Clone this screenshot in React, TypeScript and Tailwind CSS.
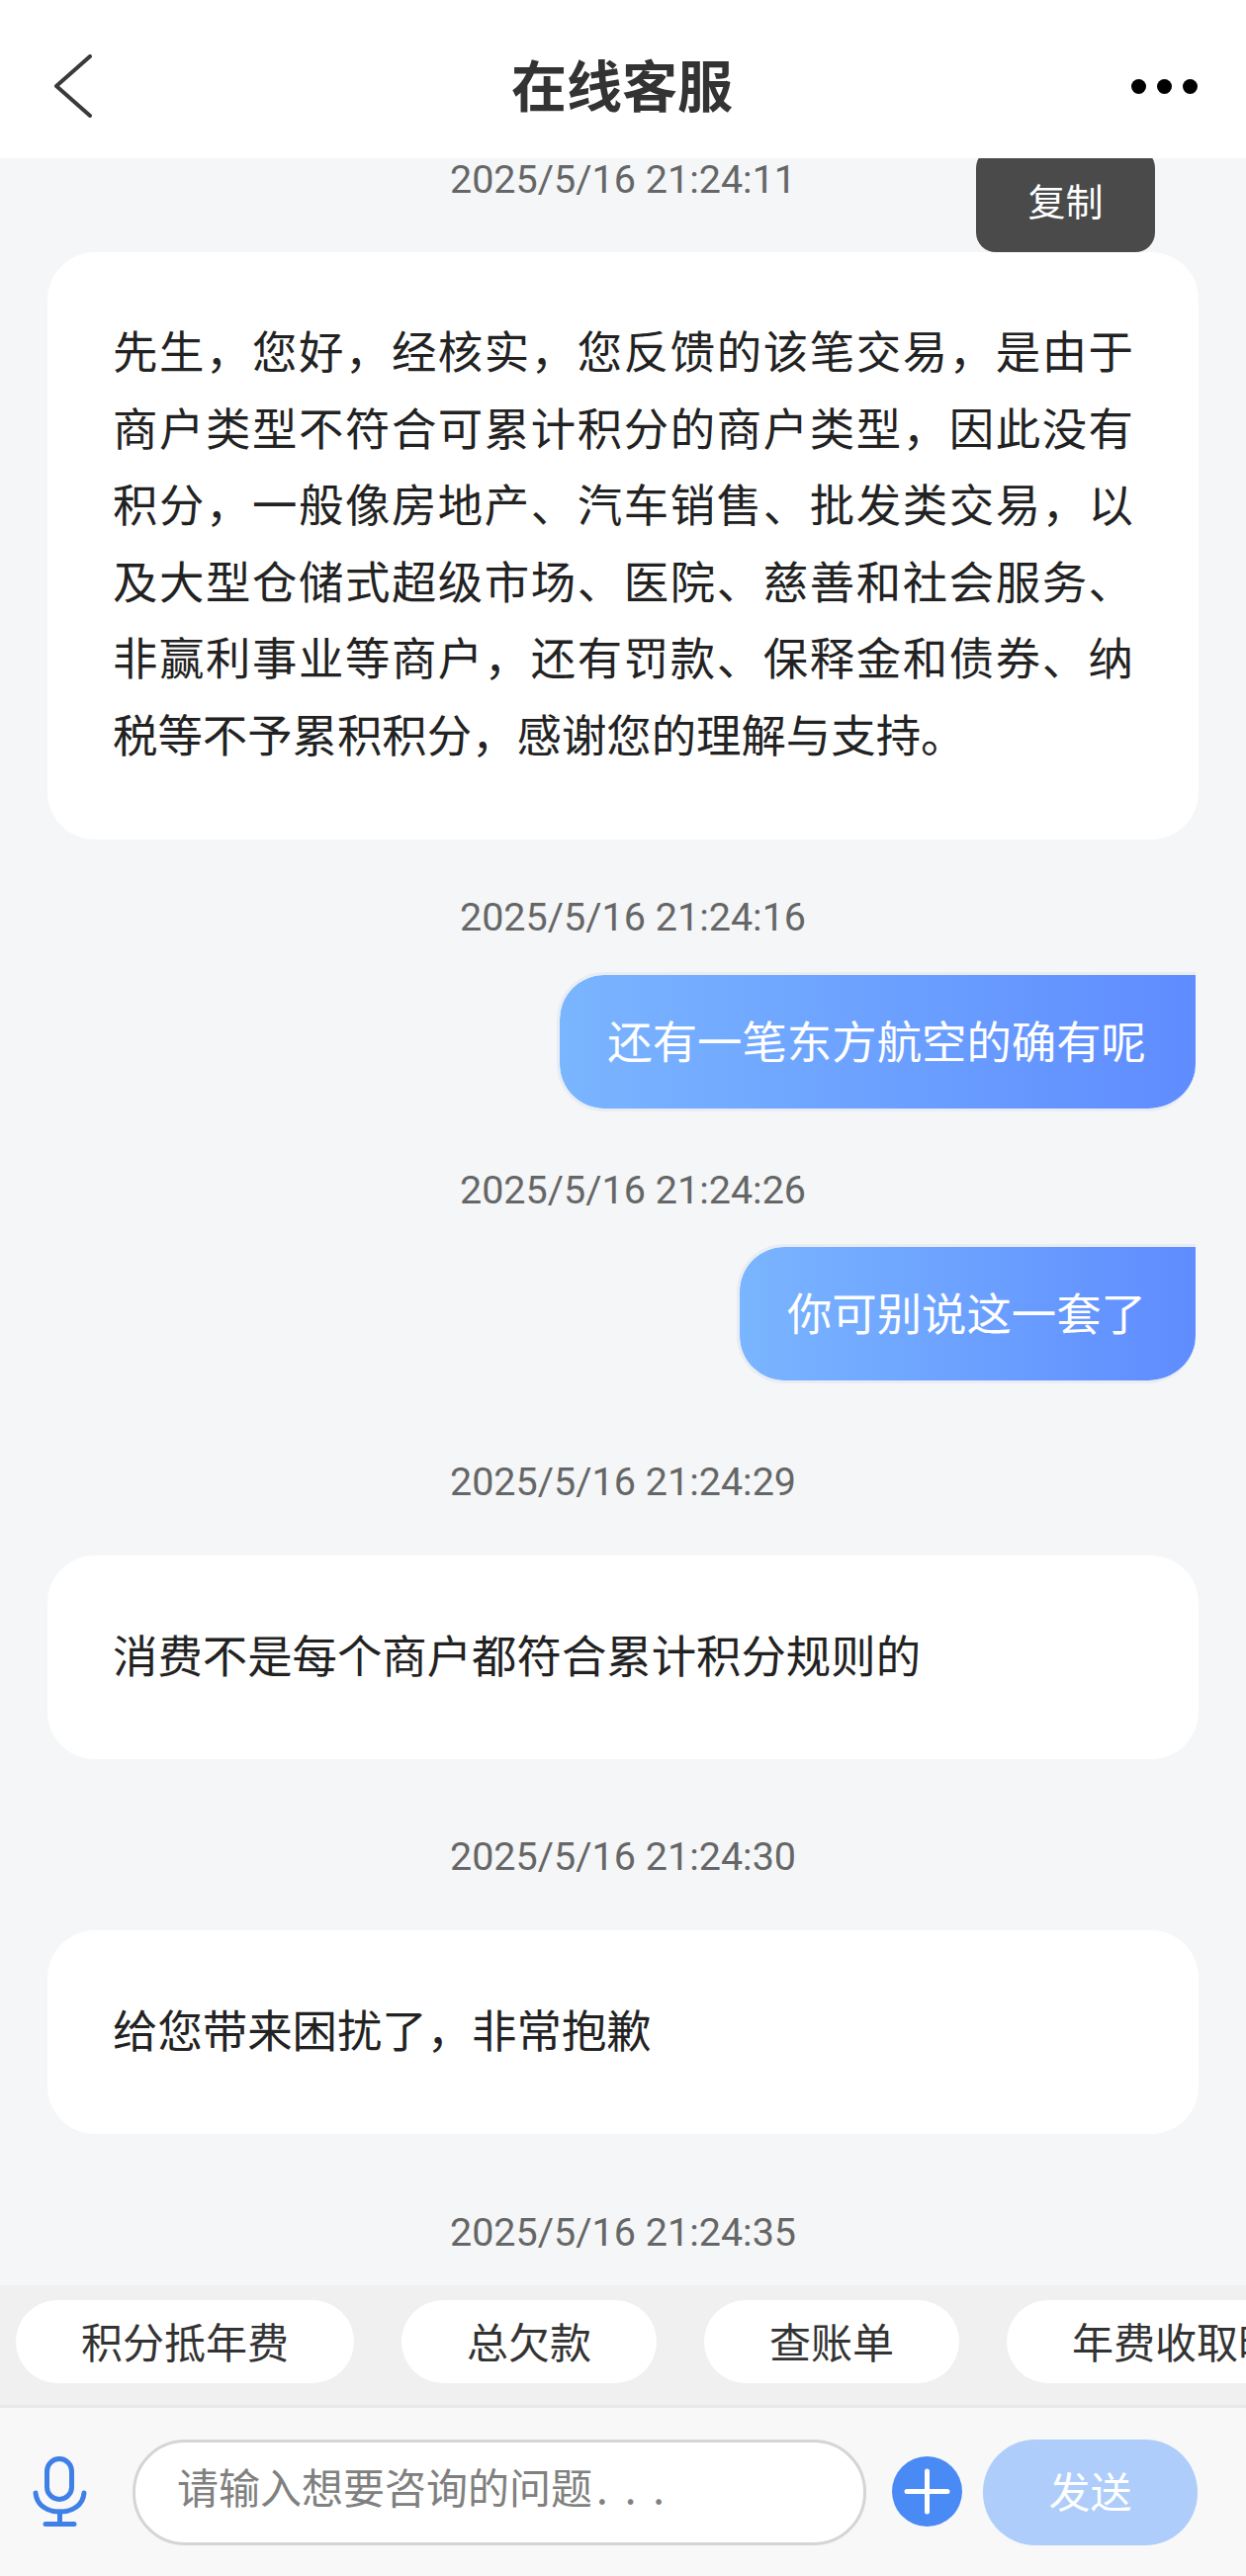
const sans = "font-['Noto_Sans_CJK_SC','Noto_Sans',sans-serif]";

function Stamp({ text, shift, className }: { text: string; shift?: boolean; className?: string }) {
  return (
    <div className={`h-[38px] flex items-center justify-center text-[39.5px] leading-[38px] text-[#666666] font-['Roboto','Noto_Sans_CJK_SC',sans-serif] ${shift ? 'pl-[20px]' : ''} ${className ?? ''}`}>
      {text}
    </div>
  );
}

function Card({ lines, className }: { lines: string[]; className?: string }) {
  return (
    <div className={`mx-[48px] bg-white rounded-[48px] px-[66px] text-[45.4px] leading-[77.5px] text-[#222222] ${className ?? ''}`}>
      {lines.map((l, i) => (
        <div
          key={l}
          className={i < lines.length - 1 ? 'text-justify [text-align-last:justify]' : 'whitespace-nowrap'}
        >
          {l}
        </div>
      ))}
    </div>
  );
}

function Bubble({ text, className }: { text: string; className?: string }) {
  return (
    <div className={`self-end mr-[51px] h-[141px] flex items-center pl-[48px] pr-[50px] pb-[4px] border-[3px] border-r-0 border-[#e9edf3] rounded-l-[48px] rounded-br-[48px] bg-gradient-to-r from-[#7ab5ff] to-[#5f8cff] bg-clip-padding text-white text-[45.4px] whitespace-nowrap ${className ?? ''}`}>
      {text}
    </div>
  );
}

function Chip({ text, className }: { text: string; className?: string }) {
  return (
    <div className={`shrink-0 h-[84px] rounded-[42px] bg-white flex items-center px-[66px] pb-[3px] text-[42px] text-[#333333] whitespace-nowrap ${className ?? ''}`}>
      {text}
    </div>
  );
}

export default function App() {
  return (
    <div className={`w-[1260px] h-[2605px] overflow-hidden flex flex-col bg-[#f4f6f8] relative ${sans}`}>
      <header className="h-[160px] shrink-0 bg-white flex items-center justify-between pt-[14px] pl-[54px] pr-[49px] relative z-10">
        <svg width="40" height="64" viewBox="0 0 40 64" fill="none">
          <path d="M37 2 L3 32 L37 62" stroke="#3a3a3a" strokeWidth="4" strokeLinecap="round" strokeLinejoin="round" />
        </svg>
        <h1 className="absolute left-0 right-[2px] top-[51px] text-center text-[56px] leading-[66px] font-bold text-[#333333]">在线客服</h1>
        <div className="flex gap-[11px]">
          <span className="w-[15px] h-[15px] rounded-full bg-black" />
          <span className="w-[15px] h-[15px] rounded-full bg-black" />
          <span className="w-[15px] h-[15px] rounded-full bg-black" />
        </div>
      </header>

      <main className="flex-1 flex flex-col min-h-0 relative">
        <div className="absolute left-[987px] top-[-10px] w-[181px] h-[105px] bg-[#4a4a4a] rounded-[20px] flex items-center justify-center pb-[3px] text-[38px] text-white">复制</div>
        <Stamp text="2025/5/16 21:24:11" className="mt-[3px]" />
        <Card
          className="mt-[54px] pt-[60px] pb-[69px]"
          lines={[
            '先生，您好，经核实，您反馈的该笔交易，是由于',
            '商户类型不符合可累计积分的商户类型，因此没有',
            '积分，一般像房地产、汽车销售、批发类交易，以',
            '及大型仓储式超级市场、医院、慈善和社会服务、',
            '非赢利事业等商户，还有罚款、保释金和债券、纳',
            '税等不予累积积分，感谢您的理解与支持。',
          ]}
        />
        <Stamp text="2025/5/16 21:24:16" shift className="mt-[60px]" />
        <Bubble text="还有一笔东方航空的确有呢" className="mt-[36px]" />
        <Stamp text="2025/5/16 21:24:26" shift className="mt-[61px]" />
        <Bubble text="你可别说这一套了" className="mt-[35px]" />
        <Stamp text="2025/5/16 21:24:29" className="mt-[81px]" />
        <Card className="mt-[55px] pt-[61px] pb-[67px]" lines={['消费不是每个商户都符合累计积分规则的']} />
        <Stamp text="2025/5/16 21:24:30" className="mt-[80px]" />
        <Card className="mt-[55px] pt-[61px] pb-[68px]" lines={['给您带来困扰了，非常抱歉']} />
        <Stamp text="2025/5/16 21:24:35" className="mt-[81px]" />
      </main>

      <div className="h-[124px] shrink-0 bg-[#f0f0f0] border-b-[3px] border-[#e8e8e8] flex items-start pt-[15px] pl-[16px] overflow-hidden">
        <Chip text="积分抵年费" />
        <Chip text="总欠款" className="ml-[48px]" />
        <Chip text="查账单" className="ml-[48px]" />
        <Chip text="年费收取时间" className="ml-[48px]" />
      </div>

      <div className="h-[170px] shrink-0 bg-[#f8f8f8] flex items-start pt-[32px] pl-[33px]">
        <svg className="mt-[17px]" width="55" height="71" viewBox="0 0 55 71" fill="none">
          <rect x="14.5" y="2.5" width="25" height="41" rx="12.5" stroke="#3f7fe8" strokeWidth="5" />
          <path d="M3 37 C4 49 14 56 27.5 56 C41 56 51 49 52 37" stroke="#3f7fe8" strokeWidth="5" strokeLinecap="round" />
          <path d="M27.5 56 V68 M13 68.5 H42" stroke="#3f7fe8" strokeWidth="5" strokeLinecap="round" />
        </svg>
        <div className="ml-[46px] w-[742px] h-[107px] rounded-[53px] bg-white border-[3px] border-[#d5d5d5] flex items-center pl-[42px] pb-[15px] text-[42px] text-[#808080] whitespace-nowrap">
          请输入想要咨询的问题<span className="tracking-[17px] ml-[4px]">...</span>
        </div>
        <svg className="ml-[26px] mt-[17px]" width="71" height="71" viewBox="0 0 71 71">
          <circle cx="35.5" cy="35.5" r="35.5" fill="#4a8af4" />
          <path d="M35.5 15 V56 M15 35.5 H56" stroke="#ffffff" strokeWidth="5" strokeLinecap="round" />
        </svg>
        <div className="ml-[21px] w-[217px] h-[107px] rounded-[53px] bg-[#aecdfb] flex items-center justify-center pb-[6px] text-[42px] text-white">发送</div>
      </div>
    </div>
  );
}
